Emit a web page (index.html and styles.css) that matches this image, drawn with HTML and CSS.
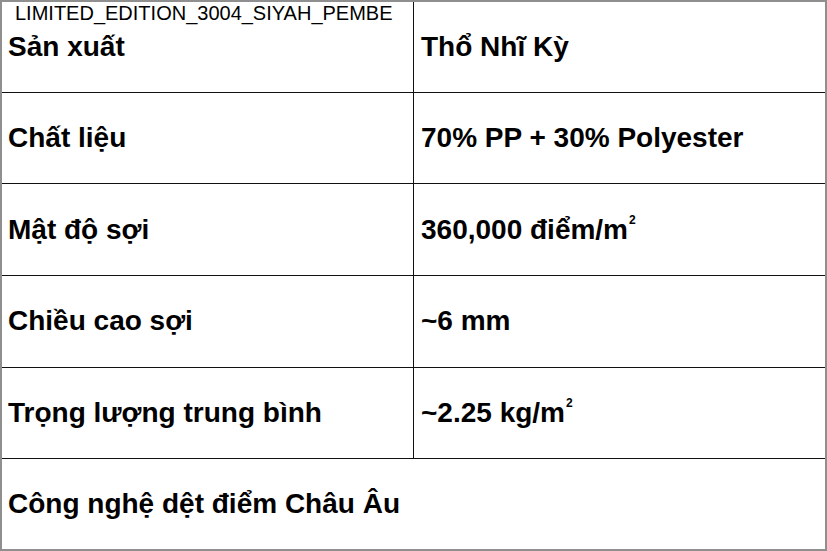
FILE: index.html
```html
<!DOCTYPE html>
<html>
<head>
<meta charset="utf-8">
<link rel="stylesheet" href="styles.css">
</head>
<body>
<div class="frame">
  <div class="label">LIMITED_EDITION_3004_SIYAH_PEMBE</div>
  <table class="spec">
    <tr><td class="k">Sản xuất</td><td class="v">Thổ Nhĩ Kỳ</td></tr>
    <tr><td class="k">Chất liệu</td><td class="v">70% PP + 30% Polyester</td></tr>
    <tr><td class="k">Mật độ sợi</td><td class="v">360,000 điểm/m<sup>2</sup></td></tr>
    <tr><td class="k">Chiều cao sợi</td><td class="v">~6 mm</td></tr>
    <tr><td class="k">Trọng lượng trung bình</td><td class="v">~2.25 kg/m<sup>2</sup></td></tr>
    <tr><td class="k full" colspan="2">Công nghệ dệt điểm Châu Âu</td></tr>
  </table>
</div>
</body>
</html>
```
FILE: styles.css
```css
html, body {
  margin: 0;
  padding: 0;
  background: #fff;
}
.frame {
  position: relative;
  width: 827px;
  height: 551px;
  box-sizing: border-box;
  border: 2px solid #8f8f8f;
  overflow: hidden;
}
.label {
  position: absolute;
  left: 13px;
  top: 0;
  font-family: "Liberation Sans", Arial, sans-serif;
  font-size: 20px;
  color: #000;
  line-height: 22px;
}
.spec {
  width: 100%;
  height: 100%;
  border-collapse: collapse;
  table-layout: fixed;
  font-family: "Liberation Sans", Arial, sans-serif;
  font-weight: bold;
  font-size: 28px;
  color: #000;
}
.spec td {
  padding: 0 0 0 6px;
  vertical-align: middle;
  border-top: 1px solid #111;
}
.spec tr:first-child td {
  border-top: none;
}
.spec td.k {
  width: 405px;
  border-right: 1px solid #111;
}
.spec td.v {
  padding-left: 7px;
}
.spec td.full {
  border-right: none;
}
.spec sup {
  font-size: 12px;
  vertical-align: 15px;
  line-height: 0;
  margin-left: 1px;
}
```
